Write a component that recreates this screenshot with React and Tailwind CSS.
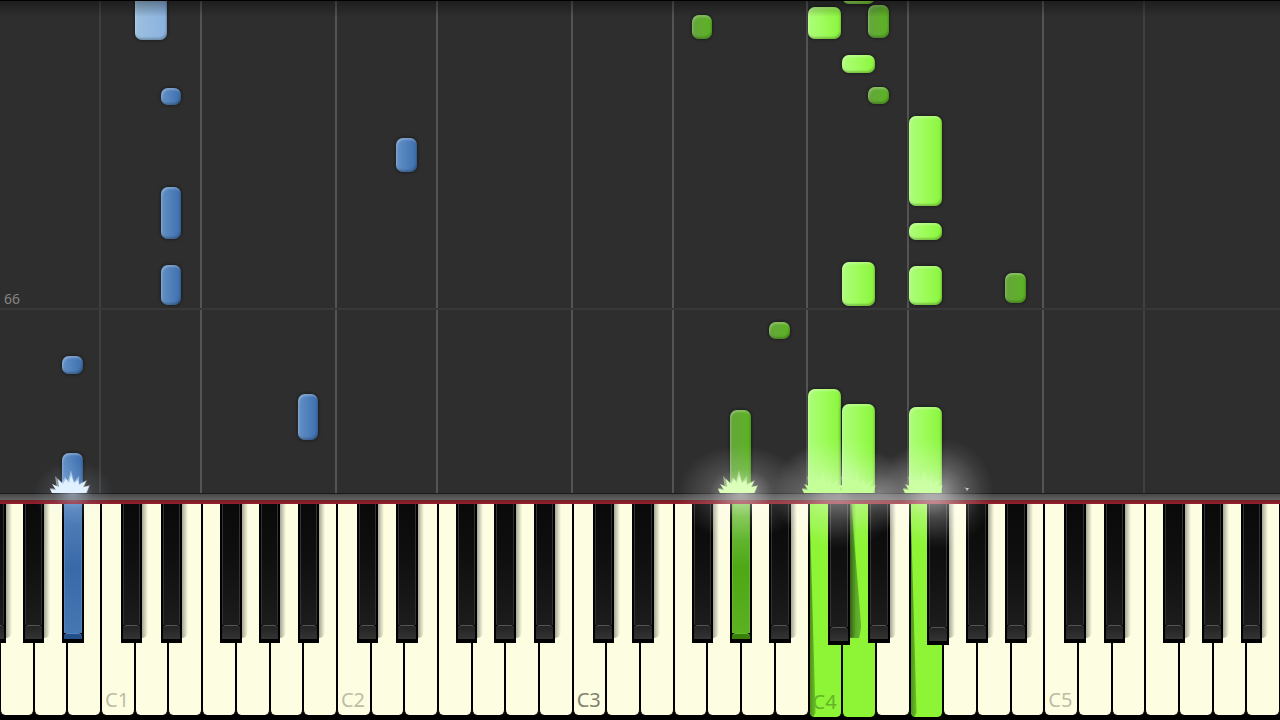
import clsx from 'clsx';

const WHITE_COUNT = 38;
const WHITE_STEPS = { C: 0, D: 1, E: 2, F: 3, G: 4, A: 5, B: 6 };
const LETTERS = 'CDEFGAB';

// left edge of each black key, in white key widths from the octave's C
const BLACK_STEPS = { 'C#': 0.59, 'D#': 1.77, 'F#': 3.53, 'G#': 4.68, 'A#': 5.84 };
const BLACK_WIDTH = 0.64;

// The keyboard starts at G0, three white keys before C1.
const octaveStart = (octave) => (octave - 1) * 7 + 3;
const percent = (steps) => `${(steps / WHITE_COUNT) * 100}%`;

function keyBox(name) {
  const pitch = name.slice(0, -1);
  const start = octaveStart(Number(name.slice(-1)));
  if (pitch in BLACK_STEPS) {
    return { left: percent(start + BLACK_STEPS[pitch]), width: percent(BLACK_WIDTH) };
  }
  return { left: percent(start + WHITE_STEPS[pitch]), width: percent(1) };
}

// bottom and height are pixels above the hit line
const NOTES = [
  { key: 'D1', hand: 'left', bottom: 453, height: 60 },
  { key: 'D#1', hand: 'left', bottom: 388, height: 17 },
  { key: 'D#1', hand: 'left', bottom: 254, height: 52 },
  { key: 'D#1', hand: 'left', bottom: 188, height: 40 },
  { key: 'D#2', hand: 'left', bottom: 321, height: 34 },
  { key: 'A#0', hand: 'left', bottom: 119, height: 18 },
  { key: 'A#0', hand: 'left', bottom: -10, height: 50 },
  { key: 'A#1', hand: 'left', bottom: 53, height: 46 },
  { key: 'F#3', hand: 'right', bottom: 454, height: 24 },
  { key: 'A#3', hand: 'right', bottom: 154, height: 17 },
  { key: 'G#3', hand: 'right', bottom: -10, height: 93 },
  { key: 'C4', hand: 'right', bottom: 454, height: 32 },
  { key: 'C4', hand: 'right', bottom: -10, height: 114 },
  { key: 'D4', hand: 'right', bottom: 489, height: 30 },
  { key: 'D4', hand: 'right', bottom: 420, height: 18 },
  { key: 'D4', hand: 'right', bottom: 187, height: 44 },
  { key: 'D4', hand: 'right', bottom: -10, height: 99 },
  { key: 'D#4', hand: 'right', bottom: 455, height: 33 },
  { key: 'D#4', hand: 'right', bottom: 389, height: 17 },
  { key: 'F4', hand: 'right', bottom: 287, height: 90 },
  { key: 'F4', hand: 'right', bottom: 253, height: 17 },
  { key: 'F4', hand: 'right', bottom: 188, height: 39 },
  { key: 'F4', hand: 'right', bottom: -10, height: 96 },
  { key: 'A#4', hand: 'right', bottom: 190, height: 30 },
];

// white keys between two octave lines
const LANES = [3, 3, 4, 3, 4, 3, 4, 3, 4, 3, 4];

const PRESSED = ['A#0', 'G#3', 'C4', 'D4', 'F4'];
const RAISED = ['C#4', 'F#4'];

const WHITE_KEYS = Array.from({ length: WHITE_COUNT }, (_, i) => {
  const n = i + 4;
  return `${LETTERS[n % 7]}${Math.floor(n / 7)}`;
});

const BLACK_KEYS = [0, 1, 2, 3, 4, 5]
  .flatMap((octave) => Object.keys(BLACK_STEPS).map((pitch) => `${pitch}${octave}`))
  .filter((name) => name !== 'C#0' && name !== 'D#0');

const NOTE_STYLES = {
  leftWhite: 'bg-linear-to-r from-[#9cc0de] to-[#8ab2e0]',
  leftBlack: 'bg-linear-to-r from-[#6391c6] to-[#3d6fae]',
  rightWhite: 'bg-linear-to-r from-[#aefd7a] via-[#9dfc58] to-[#8af53c]',
  rightBlack: 'bg-linear-to-r from-[#65a53c] to-[#5bb31f]',
};

function Note({ note }) {
  const tone = note.key.includes('#') ? 'Black' : 'White';
  return (
    <div className="absolute pr-px" style={{ ...keyBox(note.key), bottom: note.bottom, height: note.height }}>
      <div
        className={clsx(
          'h-full rounded-[7px] shadow-[0_0_3px_1px_rgba(0,0,0,0.35),inset_1px_2px_2px_rgba(255,255,255,0.25),inset_-1px_-2px_2px_rgba(0,0,0,0.22)]',
          NOTE_STYLES[note.hand + tone],
        )}
      />
    </div>
  );
}

function Spark({ name, color }) {
  return (
    <div className="absolute bottom-0 flex justify-center" style={keyBox(name)}>
      <svg viewBox="0 0 44 28" className={clsx('mr-2 h-7 w-11 shrink-0 overflow-visible', color)} fill="currentColor" aria-hidden="true">
        <path
          opacity="0.5"
          d="M5 28 L3 23 L10 24 L8 11 L15 18 L18 12 L21 16 L24 5 L27 17 L32 11 L32 19 L40 15 L37 22 L43 20 L40 28Z"
        />
        <path d="M5 28 L3 24 L9 25 L5 19 L12 22 L11 14 L16 19 L19 14 L22 18 L24 10 L27 18 L31 15 L32 20 L39 16 L36 22 L42 21 L39 28Z" />
      </svg>
    </div>
  );
}

function PianoRoll() {
  return (
    <section className="relative flex-1 overflow-hidden border-t border-black bg-[#2e2e2e]">
      <div className="absolute inset-0 flex">
        {LANES.map((keys, i) => (
          <div
            key={i}
            className={clsx(
              'border-r-2',
              i === 10 ? 'border-transparent' : i === 0 || i === 9 ? 'border-[#404040]' : 'border-[#545454]',
            )}
            style={{ width: percent(keys) }}
          />
        ))}
      </div>
      <div className="absolute inset-x-0 bottom-[183px] border-b-2 border-[#383838] px-1">
        <span className="block font-['Noto_Sans',sans-serif] text-sm leading-[18px] text-[#858585]">66</span>
      </div>
      {NOTES.map((note, i) => (
        <Note key={i} note={note} />
      ))}
      <div className="absolute inset-x-0 top-0 h-4 bg-linear-to-b from-black/35 to-transparent" />
    </section>
  );
}

function labelColor(name, pressed) {
  if (pressed) return 'text-[#65b32a]';
  return name === 'C3' ? 'text-[#82826f]' : 'text-[#bdbda4]';
}

function WhiteKey({ name }) {
  const pressed = PRESSED.includes(name);
  return (
    <button
      type="button"
      aria-label={name}
      aria-pressed={pressed}
      className={clsx(
        'relative flex flex-1 items-end overflow-hidden rounded-b-[5px] border-x border-black pl-[3px]',
        pressed ? 'h-[213px] bg-[#8df535]' : 'h-[211px] bg-[#fdfde2]',
      )}
    >
      {pressed && name !== 'D4' && (
        <span className="absolute bottom-0 left-0 h-full w-1.5 bg-linear-to-r from-[#4f9419] to-[#6fc529] [clip-path:polygon(0_0,100%_98%,60%_100%,0_100%)]" />
      )}
      {name === 'D4' && (
        <span className="absolute left-1 top-0 h-[134px] w-3.5 bg-linear-to-r from-[#4b9120] to-[#66b52e] [clip-path:polygon(0_0,30%_0,100%_92%,85%_100%,0_100%)]" />
      )}
      {name[0] === 'C' && (
        <span className={clsx("relative font-['Noto_Sans',sans-serif] text-xl leading-[30px]", labelColor(name, pressed))}>
          {name}
        </span>
      )}
    </button>
  );
}

const BLACK_FACES = {
  idle: 'border-[#333] bg-linear-to-b from-[#090909] via-[#101010] to-[#1c1c1c]',
  left: 'border-[#5583b8] bg-linear-to-b from-[#5684bd] via-[#3a69a8] to-[#4676b2]',
  right: 'border-[#67b436] bg-linear-to-b from-[#79c746] via-[#4fa714] to-[#5bb11f]',
};

const BLACK_CAPS = {
  idle: 'border-[#555] bg-linear-to-b from-[#232323] to-[#343434]',
  left: 'border-[#5485c0] bg-[#244f88]',
  right: 'border-[#66bd30] bg-[#378009]',
};

function BlackKey({ name }) {
  const pressed = PRESSED.includes(name);
  const look = !pressed ? 'idle' : name === 'A#0' ? 'left' : 'right';
  return (
    <div className={clsx('absolute -top-0.5', RAISED.includes(name) ? 'h-[143px]' : 'h-[141px]')} style={keyBox(name)}>
      {!pressed && (
        <span className="absolute left-full top-0 h-[136px] w-1.5 rounded-br-lg bg-linear-to-r from-black/35 to-transparent" />
      )}
      <button
        type="button"
        aria-label={name}
        aria-pressed={pressed}
        className="relative flex h-full w-full flex-col bg-black px-0.5 pb-1"
      >
        <span className={clsx('w-full flex-1 border-x', BLACK_FACES[look])} />
        <span className={clsx('w-full rounded-t-sm border-t', pressed ? 'h-1.5' : 'h-3.5', BLACK_CAPS[look])} />
      </button>
    </div>
  );
}

function Keyboard() {
  return (
    <section className="relative flex h-[216px] items-start bg-black">
      {WHITE_KEYS.map((name) => (
        <WhiteKey key={name} name={name} />
      ))}
      {BLACK_KEYS.map((name) => (
        <BlackKey key={name} name={name} />
      ))}
    </section>
  );
}

const GLOWS = [
  { key: 'A#0', look: 'h-16 w-20 from-[#cfe4ff]/50 via-[#cfe4ff]/10' },
  { key: 'G#3', look: 'h-24 w-32 from-white/55 via-white/15' },
  { key: 'C4', look: 'h-24 w-28 from-white/25 via-white/10' },
  { key: 'C#4', look: 'h-28 w-32 from-white/35 via-white/15' },
  { key: 'D#4', look: 'h-20 w-24 from-white/30 via-white/10' },
  { key: 'F4', look: 'h-24 w-28 from-white/35 via-white/10' },
  { key: 'F#4', look: 'h-28 w-28 from-white/40 via-white/15' },
];

// Light thrown by the notes that are sounding, centred on the hit line.
function HitEffects() {
  return (
    <div className="pointer-events-none absolute inset-x-0 top-0">
      {GLOWS.map(({ key, look }) => (
        <div key={key} className="absolute flex h-0 items-center justify-center" style={keyBox(key)}>
          <div className={clsx('shrink-0 bg-radial-[closest-side] to-transparent', look)} />
        </div>
      ))}
      <Spark name="A#0" color="text-[#e2f1ff]" />
      <Spark name="G#3" color="text-[#dcffbb]" />
      <Spark name="C4" color="text-[#c4ff98]" />
      <Spark name="D4" color="text-[#c4ff98]" />
      <Spark name="F4" color="text-[#ccffa4]" />
      <div className="absolute bottom-0.5 flex justify-end pr-2" style={keyBox('G4')}>
        <svg viewBox="0 0 5 4" className="h-1 w-[5px] shrink-0" fill="#c8c8c8" aria-hidden="true">
          <path d="M0 0 L2 1 L5 1 L3 4 L2 2Z" />
        </svg>
      </div>
    </div>
  );
}

export default function App() {
  return (
    <main className="flex h-screen flex-col overflow-hidden bg-black">
      <PianoRoll />
      <div className="relative z-10">
        <div className="h-[7px] border-t border-[#1b1b1b] bg-linear-to-b from-[#464646] to-[#626262]" />
        <div className="h-1 bg-linear-to-b from-[#6f1f27] to-[#9a1b2b]" />
        <HitEffects />
      </div>
      <div className="relative">
        <Keyboard />
      </div>
    </main>
  );
}
